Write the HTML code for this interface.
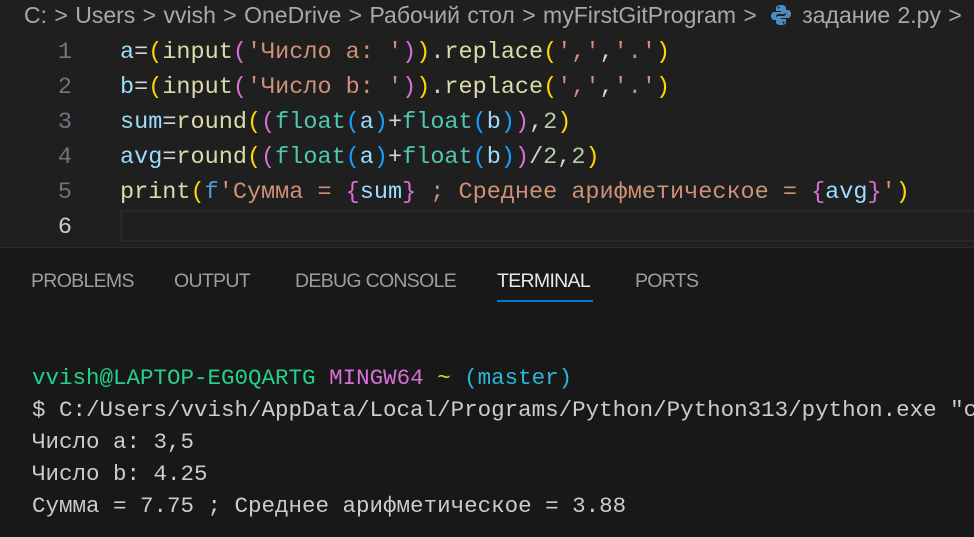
<!DOCTYPE html>
<html><head><meta charset="utf-8"><style>
body{margin:0;width:974px;height:536px;overflow:hidden;background:#1f1f1f;font-family:"Liberation Sans",sans-serif;position:relative}
.bc{position:absolute;top:0;left:24px;height:32px;line-height:30px;font-size:23px;color:#a9a9a9;white-space:nowrap;letter-spacing:0;word-spacing:1px}
.code{position:absolute;left:0;top:35px;font-family:"Liberation Mono",monospace;font-size:23.5px;white-space:pre}
.ln{position:absolute;left:0;width:72px;text-align:right;color:#6e7681;height:35px;line-height:35px}
.cl{position:absolute;left:120px;height:35px;line-height:35px;color:#d4d4d4}
.cur{position:absolute;left:120px;top:210px;width:860px;height:32px;border:2px solid #282828;box-sizing:border-box}
.v{color:#9cdcfe}.f{color:#dcdcaa}.s{color:#ce9178}.y{color:#ffd700}.p{color:#da70d6}.b{color:#179fff}.t{color:#4ec9b0}.n{color:#b5cea8}.k{color:#569cd6}
.panel{position:absolute;left:0;top:247px;width:974px;height:289px;background:#181818;border-top:1px solid #2b2b2b}
.tabs{position:absolute;top:22px;left:31px;font-size:19.5px;color:#9d9d9d;white-space:nowrap;letter-spacing:-0.7px}
.tabs span{position:absolute;top:0}
.term{position:absolute;left:32px;top:114px;font-family:"Liberation Mono",monospace;font-size:22.5px;line-height:32px;color:#cccccc;white-space:pre}
</style></head><body>
<div class="bc">C: &gt; Users &gt; vvish &gt; OneDrive &gt; Рабочий стол &gt; myFirstGitProgram &gt; <svg width="22" height="22" viewBox="0 0 22 22" style="vertical-align:-3px;margin:0 10px 0 6px"><path d="M11 1c-5 0-5 2-5 3v3h5v1H4C2 8 1 10 1 12s1 4 3 4h2v-3c0-2 1-3 3-3h5c1 0 2-1 2-2V4c0-2-2-3-5-3z" fill="#4b8bbe"/><path d="M11 21c5 0 5-2 5-3v-3h-5v-1h7c2 0 3-2 3-4s-1-4-3-4h-2v3c0 2-1 3-3 3H8c-1 0-2 1-2 2v4c0 2 2 3 5 3z" fill="#4b8bbe"/><circle cx="8.5" cy="3.5" r="1" fill="#1f1f1f"/><circle cx="13.5" cy="18.5" r="1" fill="#1f1f1f"/></svg>задание 2.py &gt;</div>
<div class="cur"></div>
<div class="code">
<div class="ln" style="top:0">1</div><div class="cl" style="top:0"><span class="v">a</span>=<span class="y">(</span><span class="f">input</span><span class="p">(</span><span class="s">'Число a: '</span><span class="p">)</span><span class="y">)</span>.<span class="f">replace</span><span class="y">(</span><span class="s">','</span>,<span class="s">'.'</span><span class="y">)</span></div>
<div class="ln" style="top:35px">2</div><div class="cl" style="top:35px"><span class="v">b</span>=<span class="y">(</span><span class="f">input</span><span class="p">(</span><span class="s">'Число b: '</span><span class="p">)</span><span class="y">)</span>.<span class="f">replace</span><span class="y">(</span><span class="s">','</span>,<span class="s">'.'</span><span class="y">)</span></div>
<div class="ln" style="top:70px">3</div><div class="cl" style="top:70px"><span class="v">sum</span>=<span class="f">round</span><span class="y">(</span><span class="p">(</span><span class="t">float</span><span class="b">(</span><span class="v">a</span><span class="b">)</span>+<span class="t">float</span><span class="b">(</span><span class="v">b</span><span class="b">)</span><span class="p">)</span>,<span class="n">2</span><span class="y">)</span></div>
<div class="ln" style="top:105px">4</div><div class="cl" style="top:105px"><span class="v">avg</span>=<span class="f">round</span><span class="y">(</span><span class="p">(</span><span class="t">float</span><span class="b">(</span><span class="v">a</span><span class="b">)</span>+<span class="t">float</span><span class="b">(</span><span class="v">b</span><span class="b">)</span><span class="p">)</span>/<span class="n">2</span>,<span class="n">2</span><span class="y">)</span></div>
<div class="ln" style="top:140px">5</div><div class="cl" style="top:140px"><span class="f">print</span><span class="y">(</span><span class="k">f</span><span class="s">'Сумма = </span><span class="p">{</span><span class="v">sum</span><span class="p">}</span><span class="s"> ; Среднее арифметическое = </span><span class="p">{</span><span class="v">avg</span><span class="p">}</span><span class="s">'</span><span class="y">)</span></div>
<div class="ln" style="top:175px;color:#cccccc">6</div>
</div>
<div class="panel">
<div class="tabs"><span style="left:0">PROBLEMS</span><span style="left:143px">OUTPUT</span><span style="left:264px">DEBUG CONSOLE</span><span style="left:466px;color:#e7e7e7">TERMINAL</span><span style="left:604px">PORTS</span></div>
<div style="position:absolute;left:497px;top:52px;width:96px;height:2px;background:#0078d4"></div>
<div class="term"><span style="color:#23d18b">vvish@LAPTOP-EG0QARTG</span> <span style="color:#d670d6">MINGW64</span> <span style="color:#e5e510">~</span> <span style="color:#29b8db">(master)</span>
$ C:/Users/vvish/AppData/Local/Programs/Python/Python313/python.exe "c
Число a: 3,5
Число b: 4.25
Сумма = 7.75 ; Среднее арифметическое = 3.88</div>
</div>
</body></html>
